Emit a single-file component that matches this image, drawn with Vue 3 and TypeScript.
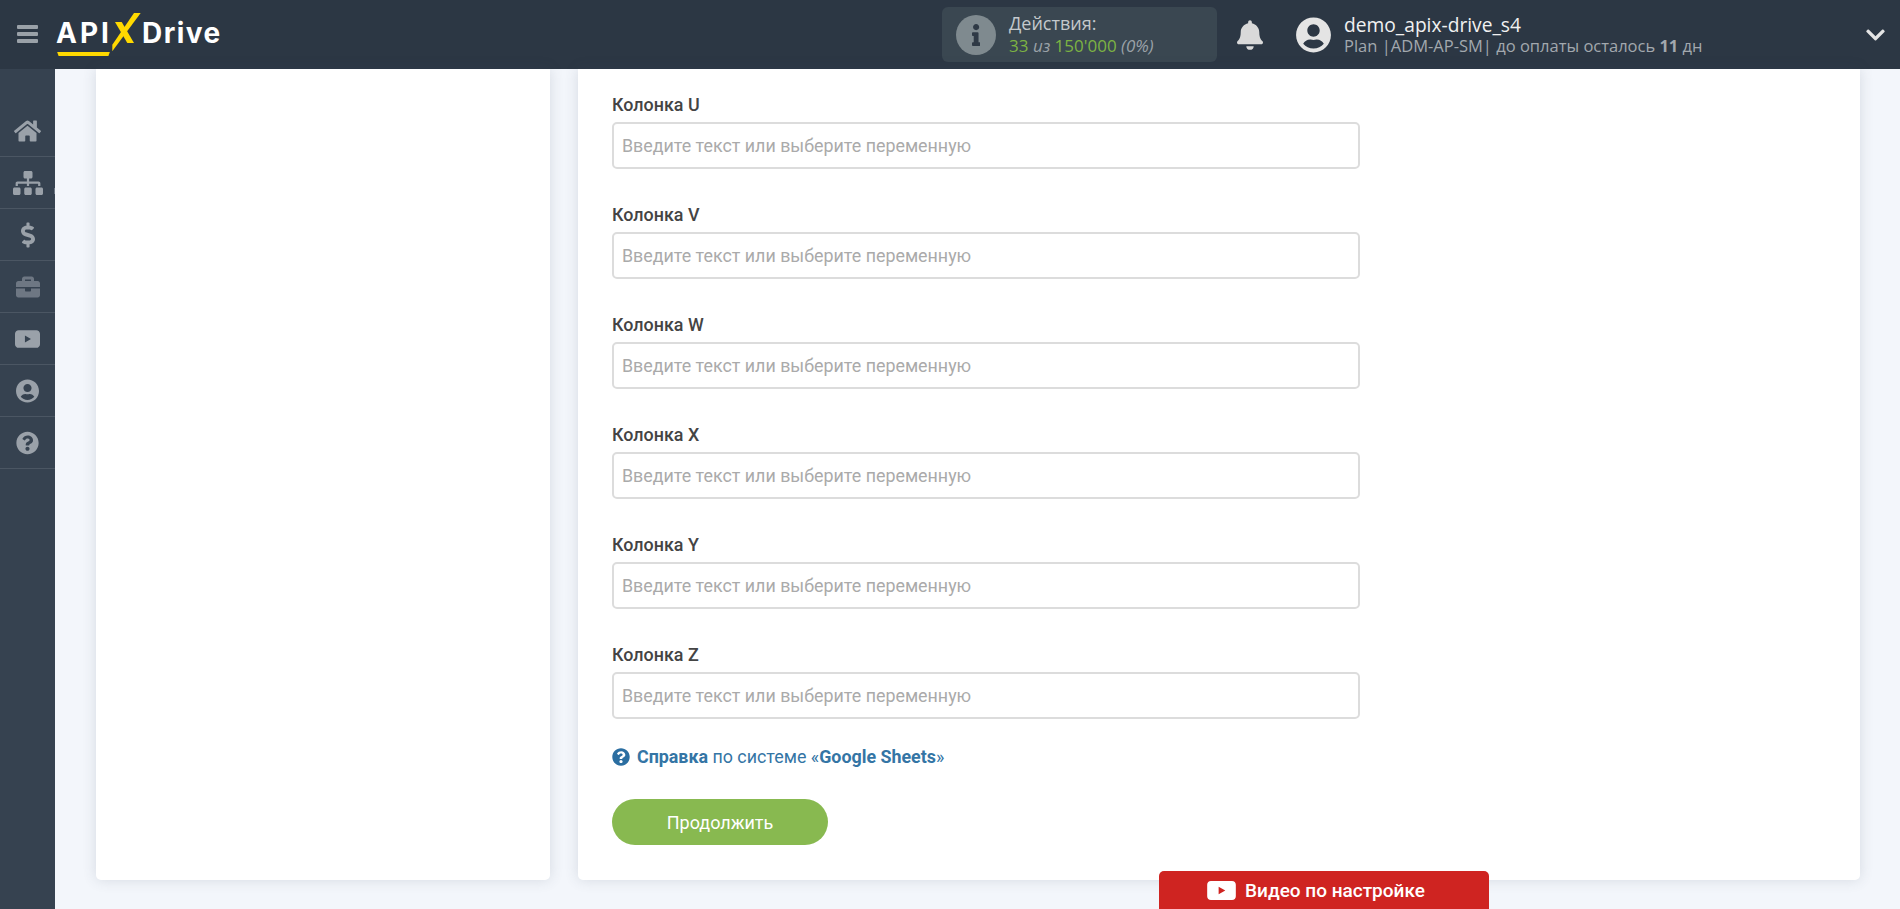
<script setup lang="ts">
const columns: string[] = ['U', 'V', 'W', 'X', 'Y', 'Z']

interface NavItem {
  name: string
  viewBox: string
  width: number
  path: string
}

const nav: NavItem[] = [
  { name: 'nav-home', viewBox: '0 0 576 512', width: 27, path: 'M280.37 148.26L96 300.11V464a16 16 0 0 0 16 16l112.06-.29a16 16 0 0 0 15.92-16V368a16 16 0 0 1 16-16h64a16 16 0 0 1 16 16v95.64a16 16 0 0 0 16 16.05L464 480a16 16 0 0 0 16-16V300L295.67 148.26a12.19 12.19 0 0 0-15.3 0zM571.6 251.47L488 182.56V44.05a12 12 0 0 0-12-12h-56a12 12 0 0 0-12 12v72.61L318.47 43a48 48 0 0 0-61 0L4.34 251.47a12 12 0 0 0-1.6 16.9l25.5 31A12 12 0 0 0 45.15 301l235.22-193.74a12.19 12.19 0 0 1 15.3 0L530.9 301a12 12 0 0 0 16.9-1.6l25.5-31a12 12 0 0 0-1.7-16.93z' },
  { name: 'nav-sitemap', viewBox: '0 0 640 512', width: 30, path: 'M128 352H32c-17.67 0-32 14.33-32 32v96c0 17.67 14.33 32 32 32h96c17.67 0 32-14.33 32-32v-96c0-17.67-14.33-32-32-32zm-24-80h192v48h48v-48h192v48h48v-57.59c0-21.17-17.23-38.41-38.41-38.41H344v-64h40c17.67 0 32-14.33 32-32V32c0-17.67-14.33-32-32-32H256c-17.67 0-32 14.33-32 32v96c0 17.67 14.33 32 32 32h40v64H94.41C73.23 224 56 241.23 56 262.41V320h48v-48zm264 80h-96c-17.67 0-32 14.33-32 32v96c0 17.67 14.33 32 32 32h96c17.67 0 32-14.33 32-32v-96c0-17.67-14.33-32-32-32zm240 0h-96c-17.67 0-32 14.33-32 32v96c0 17.67 14.33 32 32 32h96c17.67 0 32-14.33 32-32v-96c0-17.67-14.33-32-32-32z' },
  { name: 'nav-dollar', viewBox: '0 0 288 512', width: 14, path: 'M209.2 233.4l-108-31.6C88.7 198.2 80 186.5 80 173.5c0-16.3 13.2-29.5 29.5-29.5h66.3c12.2 0 24.2 3.7 34.2 10.5 6.1 4.1 14.3 3.1 19.5-2l34.8-34c7.1-6.9 6.1-18.4-1.8-24.5C238 74.8 207.4 64.1 176 64V16c0-8.8-7.2-16-16-16h-32c-8.8 0-16 7.2-16 16v48h-2.5C45.8 64-5.4 118.7.5 183.6c4.2 46.1 39.4 83.6 83.8 96.6l102.5 30c12.5 3.7 21.2 15.3 21.2 28.3 0 16.3-13.2 29.5-29.5 29.5h-66.3C100 368 88 364.3 78 357.5c-6.1-4.1-14.3-3.1-19.5 2l-34.8 34c-7.1 6.9-6.1 18.4 1.8 24.5 24.5 19.2 55.1 29.9 86.5 30v48c0 8.8 7.2 16 16 16h32c8.8 0 16-7.2 16-16v-48.2c46.6-.9 90.3-28.6 105.7-72.7 21.5-61.6-14.6-124.8-72.5-141.7z' },
  { name: 'nav-briefcase', viewBox: '0 0 512 512', width: 24, path: 'M320 336c0 8.84-7.16 16-16 16h-96c-8.84 0-16-7.16-16-16v-48H0v144c0 25.6 22.4 48 48 48h416c25.6 0 48-22.4 48-48V288H320v48zm144-208h-80V80c0-25.6-22.4-48-48-48H176c-25.6 0-48 22.4-48 48v48H48c-25.6 0-48 22.4-48 48v80h512v-80c0-25.6-22.4-48-48-48zm-144 0H192V96h128v32z' },
  { name: 'nav-video', viewBox: '16 64 544 384', width: 25, path: 'M96 64h384c44 0 80 36 80 80v224c0 44-36 80-80 80H96c-44 0-80-36-80-80V144c0-44 36-80 80-80zM232 180v152l132-76z' },
  { name: 'nav-user', viewBox: '0 0 496 512', width: 23, path: 'M248 8C111 8 0 119 0 256s111 248 248 248 248-111 248-248S385 8 248 8zm0 96c48.6 0 88 39.4 88 88s-39.4 88-88 88-88-39.4-88-88 39.4-88 88-88zm0 344c-58.7 0-111.3-26.6-146.5-68.2 18.8-35.4 55.6-59.8 98.5-59.8 2.4 0 4.8.4 7.1 1.1 13 4.2 26.6 6.9 40.9 6.9 14.3 0 28-2.7 40.9-6.9 2.3-.7 4.7-1.1 7.1-1.1 42.9 0 79.7 24.4 98.5 59.8C359.3 421.4 306.7 448 248 448z' },
  { name: 'nav-help', viewBox: '0 0 512 512', width: 23, path: 'M504 256c0 136.997-111.043 248-248 248S8 392.997 8 256C8 119.083 119.043 8 256 8s248 111.083 248 248zM262.655 90c-54.497 0-89.255 22.957-116.549 63.758-3.536 5.286-2.353 12.415 2.715 16.258l34.699 26.31c5.205 3.947 12.621 3.008 16.665-2.122 17.864-22.658 30.113-35.797 57.303-35.797 20.429 0 45.698 13.148 45.698 32.958 0 14.976-12.363 22.667-32.534 33.976C247.128 238.528 216 254.941 216 296v4c0 6.627 5.373 12 12 12h56c6.627 0 12-5.373 12-12v-1.333c0-28.462 83.186-29.647 83.186-106.667 0-58.002-60.165-102-116.531-102zM256 338c-25.365 0-46 20.635-46 46 0 25.364 20.635 46 46 46s46-20.636 46-46c0-25.365-20.635-46-46-46z' }
]

const helpPath: string = nav[6].path
const userPath: string = nav[5].path
</script>

<template>
  <div class="app">
    <header class="topbar">
      <div class="burger" aria-label="Меню"><i></i><i></i><i></i></div>
      <div class="logo">
        <span class="logo-api">API</span>
        <svg class="logo-x" viewBox="0 0 29 39" aria-hidden="true">
          <path d="M3 9h6.700L22 30h-6.700z" fill="#ffd900" />
          <path d="M28.700 0H22L0.300 31.700v6.600z" fill="#ffd900" />
        </svg>
        <span class="logo-drive">Drive</span>
        <span class="logo-line"></span>
      </div>

      <div class="stats">
        <span class="stats-icon">
          <svg viewBox="0 0 192 512" aria-hidden="true"><path d="M20 424.229h20V279.771H20c-11.046 0-20-8.954-20-20V212c0-11.046 8.954-20 20-20h112c11.046 0 20 8.954 20 20v212.229h20c11.046 0 20 8.954 20 20V492c0 11.046-8.954 20-20 20H20c-11.046 0-20-8.954-20-20v-47.771c0-11.046 8.954-20 20-20zM96 0C56.235 0 24 32.235 24 72s32.235 72 72 72 72-32.235 72-72S135.764 0 96 0z" /></svg>
        </span>
        <div class="stats-text">
          <div class="stats-title">Действия:</div>
          <div class="stats-count"><b>33</b> <em>из</em> <b>150'000</b> <em>(0%)</em></div>
        </div>
      </div>

      <svg class="bell" viewBox="0 0 448 512" aria-hidden="true"><path d="M224 512c35.32 0 63.97-28.65 63.97-64H160.03c0 35.35 28.65 64 63.97 64zm215.39-149.71c-19.32-20.76-55.47-51.99-55.47-154.29 0-77.7-54.48-139.9-127.94-155.16V32c0-17.67-14.32-32-31.98-32s-31.98 14.33-31.98 32v20.84C118.56 68.1 64.08 130.3 64.08 208c0 102.3-36.15 133.53-55.47 154.29-6 6.45-8.66 14.16-8.61 21.71.11 16.4 12.98 32 32.1 32h383.8c19.12 0 32-15.6 32.1-32 .05-7.55-2.61-15.27-8.61-21.71z" /></svg>

      <svg class="avatar" viewBox="0 0 496 512" aria-hidden="true"><path :d="userPath" /></svg>
      <div class="account">
        <div class="account-name">demo_apix-drive_s4</div>
        <div class="account-plan">Plan |ADM-AP-SM| до оплаты осталось <b>11</b> дн</div>
      </div>

      <svg class="chevron" viewBox="0 0 448 512" aria-hidden="true"><path d="M207.029 381.476L12.686 187.132c-9.373-9.373-9.373-24.569 0-33.941l22.667-22.667c9.357-9.357 24.522-9.375 33.901-.04L224 284.505l154.745-154.021c9.379-9.335 24.544-9.317 33.901.04l22.667 22.667c9.373 9.373 9.373 24.569 0 33.941L240.971 381.476c-9.373 9.372-24.569 9.372-33.942 0z" /></svg>
    </header>

    <div class="body">
      <nav class="sidebar">
        <a v-for="item in nav" :key="item.name" class="nav-item" :class="item.name">
          <svg :viewBox="item.viewBox" :style="{ width: item.width + 'px' }" aria-hidden="true"><path :d="item.path" fill-rule="evenodd" /></svg>
        </a>
      </nav>

      <main class="content">
        <aside class="card side-card"></aside>
        <section class="card form-card">
          <div v-for="col in columns" :key="col" class="field">
            <label class="field-label">Колонка {{ col }}</label>
            <input class="field-input" type="text" placeholder="Введите текст или выберите переменную" />
          </div>

          <div class="help">
            <svg viewBox="0 0 512 512" aria-hidden="true"><path :d="helpPath" /></svg>
            <span><b>Справка</b> по системе «<b>Google Sheets</b>»</span>
          </div>

          <button class="next" type="button">Продолжить</button>
        </section>
      </main>
    </div>

    <div class="video-tab">
      <svg viewBox="0 0 32 22" aria-hidden="true">
        <path d="M5 1h22c2.500 0 4 1.500 4 4v12c0 2.500-1.500 4-4 4H5c-2.500 0-4-1.500-4-4V5c0-2.500 1.500-4 4-4zM13 7v8l7-4z" fill="#fff" fill-rule="evenodd" />
      </svg>
      <span>Видео по настройке</span>
    </div>
  </div>
</template>

<style>
html, body { margin: 0; background: #f3f6fb; overflow: hidden; }
</style>

<style scoped>
.app {
  position: relative;
  display: flex;
  flex-direction: column;
  height: 909px;
  overflow: hidden;
  font-family: Roboto, "Liberation Sans", sans-serif;
}

.topbar {
  display: flex;
  align-items: center;
  flex: 0 0 69px;
  padding: 0 15px 0 17px;
  box-sizing: border-box;
  background: #2c3744;
}

.burger {
  display: flex;
  flex-direction: column;
  gap: 3.500px;
  width: 21px;
  margin-bottom: 1px;
}
.burger i {
  display: block;
  height: 3.500px;
  border-radius: 1px;
  background: #9aa1a8;
}

.logo {
  position: relative;
  display: flex;
  align-items: center;
  width: 168px;
  height: 42px;
  margin-left: 17px;
  margin-bottom: 3px;
  color: #fff;
  font-family: Inter, "Open Sans", sans-serif;
  font-size: 28px;
  font-weight: 700;
  line-height: 1;
}
.logo-api { letter-spacing: 3px; margin-left: 1px; }
.logo-x {
  width: 29px;
  height: 39px;
  margin: -2px 1px 0 0;
  flex: none;
}
.logo-drive { letter-spacing: 1.500px; }
.logo-line {
  position: absolute;
  left: 2px;
  bottom: -2px;
  width: 53px;
  height: 4.500px;
  background: #ffd900;
  clip-path: polygon(0 0, 100% 0, 97% 100%, 3% 100%);
}

.stats {
  display: flex;
  align-items: center;
  width: 275px;
  height: 55px;
  margin-left: 719px;
  padding-left: 14px;
  box-sizing: border-box;
  border-radius: 6px;
  background: #3a4751;
}
.stats-icon {
  display: flex;
  align-items: center;
  justify-content: center;
  width: 40px;
  height: 40px;
  border-radius: 50%;
  background: #7f8a8f;
}
.stats-icon svg { height: 22px; fill: #2f3a46; }
.stats-text {
  margin-left: 13px;
  font-family: "Open Sans", sans-serif;
  font-size: 17px;
  line-height: 21px;
  color: #c4c9cc;
}
.stats-title { font-size: 18px; margin-top: -2px; margin-bottom: 1px; line-height: 22px; }
.stats-count b { font-weight: 400; color: #7db343; }
.stats-count em { color: #9aa2a8; }

.bell {
  width: 26px;
  height: 30px;
  margin-left: 20px;
  fill: #d9d9d9;
}
.avatar {
  width: 35px;
  height: 36px;
  margin-left: 33px;
  fill: #e4e4e4;
}
.account {
  flex: 1;
  margin-left: 13px;
  font-family: "Open Sans", sans-serif;
}
.account-name {
  font-size: 19.200px;
  line-height: 23px;
  color: #f1f1f1;
}
.account-plan {
  font-size: 16.500px;
  line-height: 20px;
  color: #a2a8ae;
}
.chevron {
  width: 19px;
  height: 22px;
  fill: #e4e4e4;
}

.body {
  display: flex;
  flex: 1;
  min-height: 0;
}

.sidebar {
  flex: 0 0 55px;
  padding-top: 36px;
  box-sizing: border-box;
  background: #364250;
}
.nav-item {
  position: relative;
  display: flex;
  align-items: center;
  justify-content: center;
  height: 52px;
  box-sizing: border-box;
  border-bottom: 1px solid #4b5663;
}
.nav-item svg { height: 26px; fill: #9aa1a9; }
.nav-item.nav-briefcase svg { fill: #6e7783; }
.nav-item.nav-sitemap::after {
  content: "";
  position: absolute;
  right: 0;
  bottom: 14px;
  width: 1.500px;
  height: 6px;
  background: #6d7784;
}

.content {
  display: flex;
  flex: 1;
  align-items: stretch;
  gap: 28px;
  padding: 0 40px 29px 41px;
  min-width: 0;
  background: #f3f6fb;
}
.card {
  background: #fff;
  border-radius: 0 0 5px 5px;
  box-shadow: 0 0 14px rgba(60, 75, 95, 0.16);
}
.side-card { flex: 0 0 454px; }
.form-card {
  flex: 1;
  padding: 26px 34px 0;
  box-sizing: border-box;
}

.field { margin-bottom: 36px; }
.field-label {
  display: block;
  height: 20px;
  margin-bottom: 7px;
  font-size: 17.900px;
  font-weight: 500;
  line-height: 20px;
  color: #444444;
}
.field-input {
  display: block;
  width: 748px;
  height: 47px;
  padding: 0 8px;
  box-sizing: border-box;
  border: 2px solid #dcdcdc;
  border-radius: 5px;
  outline: none;
  background: #fff;
  font-family: Roboto, sans-serif;
  font-size: 17.850px;
  color: #444444;
}
.field-input::placeholder { color: #aaaaaa; opacity: 1; }

.help {
  display: flex;
  align-items: center;
  gap: 7px;
  margin-top: -10px;
  font-size: 17.850px;
  line-height: 24px;
  color: #3475a5;
}
.help svg { width: 18px; height: 18px; fill: #2b6ea1; }
.help b { font-weight: 700; }

.next {
  display: block;
  width: 216px;
  height: 46px;
  margin-top: 30px;
  border: 0;
  border-radius: 23px;
  background: #88b950;
  font-family: Roboto, sans-serif;
  font-size: 18px;
  font-weight: 400;
  color: #fff;
}

.video-tab {
  position: absolute;
  left: 1159px;
  bottom: 0;
  display: flex;
  align-items: center;
  justify-content: center;
  gap: 8px;
  width: 330px;
  height: 38px;
  padding-right: 17px;
  box-sizing: border-box;
  border-radius: 5px 5px 0 0;
  background: #cf2421;
  font-size: 19px;
  font-weight: 500;
  color: #fff;
}
.video-tab svg { width: 31px; height: 21px; }
</style>
